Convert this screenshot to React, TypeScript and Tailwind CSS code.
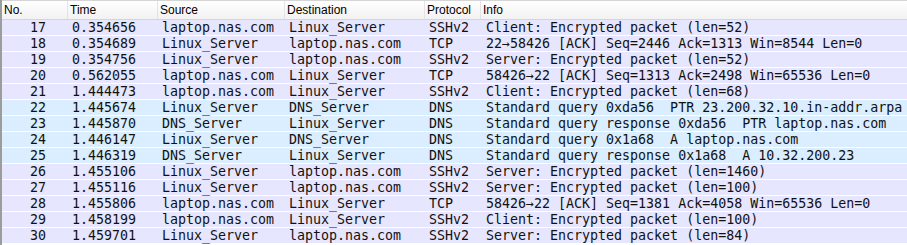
// Packet list, Wireshark style
const packets = [
  { no: 17, time: '0.354656', src: 'laptop.nas.com', dst: 'Linux_Server', proto: 'SSHv2', info: 'Client: Encrypted packet (len=52)' },
  { no: 18, time: '0.354689', src: 'Linux_Server', dst: 'laptop.nas.com', proto: 'TCP', info: '22\u219258426 [ACK] Seq=2446 Ack=1313 Win=8544 Len=0' },
  { no: 19, time: '0.354756', src: 'Linux_Server', dst: 'laptop.nas.com', proto: 'SSHv2', info: 'Server: Encrypted packet (len=52)' },
  { no: 20, time: '0.562055', src: 'laptop.nas.com', dst: 'Linux_Server', proto: 'TCP', info: '58426\u219222 [ACK] Seq=1313 Ack=2498 Win=65536 Len=0' },
  { no: 21, time: '1.444473', src: 'laptop.nas.com', dst: 'Linux_Server', proto: 'SSHv2', info: 'Client: Encrypted packet (len=68)' },
  { no: 22, time: '1.445674', src: 'Linux_Server', dst: 'DNS_Server', proto: 'DNS', info: 'Standard query 0xda56  PTR 23.200.32.10.in-addr.arpa' },
  { no: 23, time: '1.445870', src: 'DNS_Server', dst: 'Linux_Server', proto: 'DNS', info: 'Standard query response 0xda56  PTR laptop.nas.com' },
  { no: 24, time: '1.446147', src: 'Linux_Server', dst: 'DNS_Server', proto: 'DNS', info: 'Standard query 0x1a68  A laptop.nas.com' },
  { no: 25, time: '1.446319', src: 'DNS_Server', dst: 'Linux_Server', proto: 'DNS', info: 'Standard query response 0x1a68  A 10.32.200.23' },
  { no: 26, time: '1.455106', src: 'Linux_Server', dst: 'laptop.nas.com', proto: 'SSHv2', info: 'Server: Encrypted packet (len=1460)' },
  { no: 27, time: '1.455116', src: 'Linux_Server', dst: 'laptop.nas.com', proto: 'SSHv2', info: 'Server: Encrypted packet (len=100)' },
  { no: 28, time: '1.455806', src: 'laptop.nas.com', dst: 'Linux_Server', proto: 'TCP', info: '58426\u219222 [ACK] Seq=1381 Ack=4058 Win=65536 Len=0' },
  { no: 29, time: '1.458199', src: 'laptop.nas.com', dst: 'Linux_Server', proto: 'SSHv2', info: 'Client: Encrypted packet (len=100)' },
  { no: 30, time: '1.459701', src: 'Linux_Server', dst: 'laptop.nas.com', proto: 'SSHv2', info: 'Server: Encrypted packet (len=84)' },
]

const cols = 'grid grid-cols-[66px_90px_127px_140px_56px_1fr]'

function App(): JSX.Element {
  return (
    <div className="w-[907px] h-[245px] overflow-hidden bg-white border-l-2 border-[#9c9c9c]">
      {/* Header */}
      <div
        className={`${cols} h-[20px] items-center border-t border-b border-[#d5d5d5] bg-gradient-to-b from-white to-[#f2f2f2] text-[12px] text-black`}
        style={{ fontFamily: '"Liberation Sans", Arial, sans-serif' }}
      >
        <div className="pl-[2px] border-r border-[#e3e3e3] h-full flex items-center">No.</div>
        <div className="pl-[2px] border-r border-[#e3e3e3] h-full flex items-center">Time</div>
        <div className="pl-[2px] border-r border-[#e3e3e3] h-full flex items-center">Source</div>
        <div className="pl-[2px] border-r border-[#e3e3e3] h-full flex items-center">Destination</div>
        <div className="pl-[2px] border-r border-[#e3e3e3] h-full flex items-center">Protocol</div>
        <div className="pl-[2px] h-full flex items-center">Info</div>
      </div>

      {/* Rows */}
      <div className="text-[13.3px] text-[#111]" style={{ fontFamily: '"DejaVu Sans Mono", monospace' }}>
        {packets.map((p) => (
          <div
            key={p.no}
            className={`${cols} h-[16px] leading-[15px] border-b border-white whitespace-pre ${
              p.proto === 'DNS' ? 'bg-[#daeeff]' : 'bg-[#e7e6ff]'
            }`}
          >
            <div className="text-right pr-[22px]">{p.no}</div>
            <div className="pl-[4px]">{p.time}</div>
            <div className="pl-[4px]">{p.src}</div>
            <div className="pl-[4px]">{p.dst}</div>
            <div className="pl-[4px]">{p.proto}</div>
            <div className="pl-[5px]">{p.info}</div>
          </div>
        ))}
      </div>
    </div>
  )
}

export default App
